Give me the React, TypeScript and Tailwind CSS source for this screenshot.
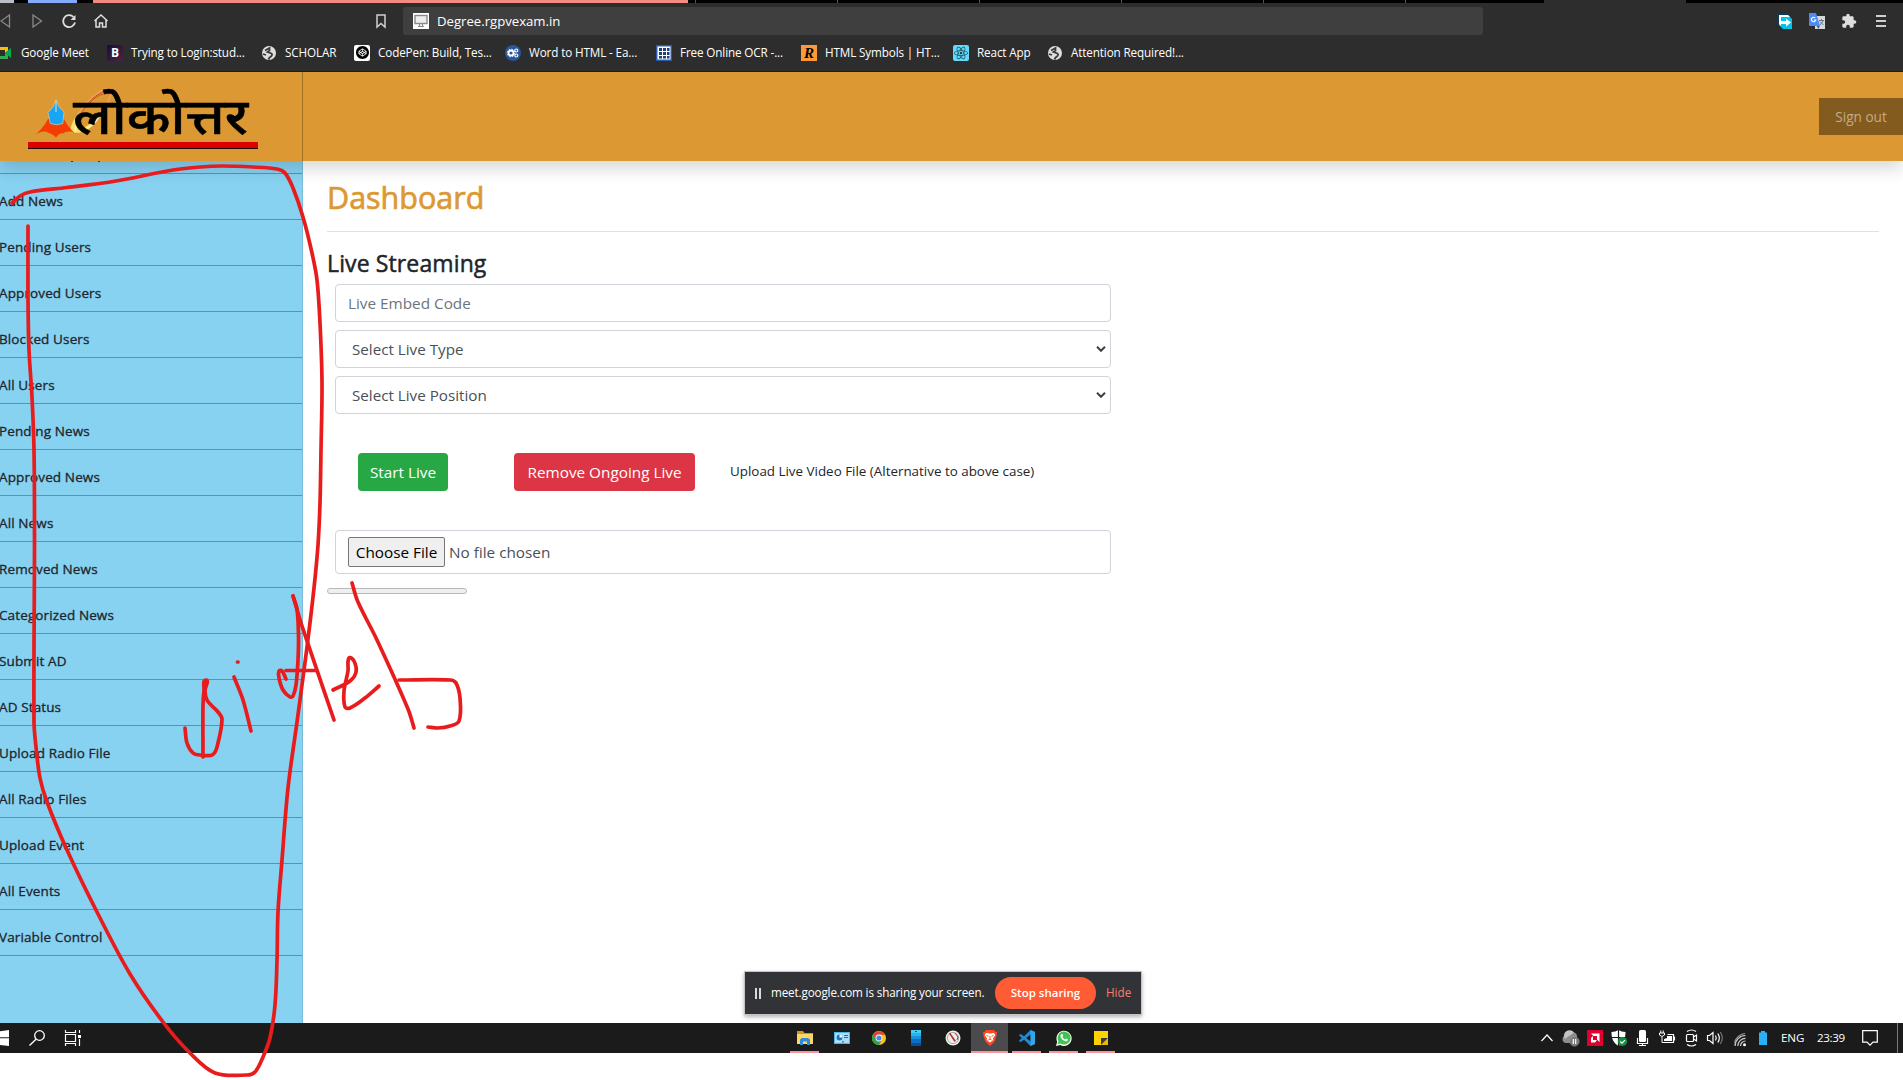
import type { ReactNode } from 'react';
import { SiReact, SiCodepen } from 'react-icons/si';
import { MdExtension } from 'react-icons/md';

const menu = [
  'Add News', 'Pending Users', 'Approved Users', 'Blocked Users', 'All Users', 'Pending News',
  'Approved News', 'All News', 'Removed News', 'Categorized News', 'Submit AD', 'AD Status',
  'Upload Radio File', 'All Radio Files', 'Upload Event', 'All Events', 'Variable Control',
];

type Pt = [number, number];

const strokes: Pt[][] = [
  [[12, 203], [20, 196], [30, 192], [67, 187.5], [113, 181.5], [173, 170], [200, 167], [222, 166], [253, 167], [277, 169], [285, 173], [293, 188], [303, 217], [312, 253], [317, 280], [320, 323], [322, 383], [321, 450], [320, 503], [318, 545], [314, 588], [307, 647], [297, 722], [288, 788], [282, 860], [278, 912], [277, 960], [275, 1005], [270, 1038], [263, 1057], [255, 1072], [247, 1075], [215, 1073], [190, 1053], [163, 1022], [130, 974], [97, 912], [67, 850], [47, 802], [40, 778], [36, 747], [34, 722], [34.5, 540], [34, 450], [32, 397], [29, 350], [28, 300], [28, 226]],
  [[185, 728], [187, 743], [193, 753], [200, 755], [213, 754.5], [218, 743], [222, 719], [218, 712], [212, 706], [207, 700], [205, 691], [206, 680], [204, 691], [203, 705], [203, 757]],
  [[234, 677], [243, 700], [251, 731]],
  [[237.5, 662], [238, 662]],
  [[293, 596], [297, 609], [298.5, 636], [298, 660], [296, 685], [293, 696], [290, 697], [283, 690], [279, 678], [279, 671], [282, 671], [286, 679]],
  [[293, 596], [302, 626], [334, 720]],
  [[286, 670.5], [316, 670.5]],
  [[333, 690], [350, 681], [356, 672], [354, 661], [349, 658], [348, 671], [344, 691], [345, 707], [350, 708], [365, 698], [379, 686]],
  [[352, 583], [358, 602], [377, 640], [408, 709], [414, 728]],
  [[399, 680], [450, 680], [456, 683], [460, 698], [459, 721], [450, 726], [438, 728], [428, 727]],
];

function smooth(p: Pt[]) {
  let d = `M${p[0][0]} ${p[0][1]}`;
  for (let i = 0; i < p.length - 1; i++) {
    const a = p[Math.max(i - 1, 0)];
    const b = p[i];
    const c = p[i + 1];
    const e = p[Math.min(i + 2, p.length - 1)];
    const len = Math.hypot(c[0] - b[0], c[1] - b[1]);
    const h1 = len / (Math.hypot(c[0] - a[0], c[1] - a[1]) || 1) / 3;
    const h2 = len / (Math.hypot(e[0] - b[0], e[1] - b[1]) || 1) / 3;
    d += `C${b[0] + (c[0] - a[0]) * h1} ${b[1] + (c[1] - a[1]) * h1} ${c[0] - (e[0] - b[0]) * h2} ${c[1] - (e[1] - b[1]) * h2} ${c[0]} ${c[1]}`;
  }
  return d;
}

function Globe() {
  return (
    <svg className="size-4" viewBox="0 0 16 16">
      <circle cx="8" cy="8" r="7" fill="#dedede" />
      <path d="M4 5.500L8.500 3v2.500L6.500 7l4 1.500c1.500 1 0 3-2 4l-1 2M2 9l3 1" fill="none" stroke="#3a3a3a" strokeWidth="1.800" />
    </svg>
  );
}

function Bookmark({ w, icon, children }: { w: string; icon: ReactNode; children: ReactNode }) {
  return (
    <div className={`flex shrink-0 items-center gap-2 ${w}`}>
      <span className="flex size-4 shrink-0 items-center justify-center">{icon}</span>
      <span className="whitespace-nowrap">{children}</span>
    </div>
  );
}

function TabStrip() {
  return (
    <div className="flex h-[3px] bg-black">
      <div className="w-[14px] bg-[#b9bcc4]" />
      <div className="ml-[14px] w-[49px] bg-[#84abfb]" />
      <div className="ml-[16px] w-[595px] bg-[#f28b82]" />
      <div className="ml-[7px] w-px bg-[#555]" />
      <div className="ml-[141px] w-px bg-[#555]" />
      <div className="ml-[141px] w-px bg-[#555]" />
      <div className="ml-[141px] w-px bg-[#555]" />
      <div className="ml-[141px] w-px bg-[#555]" />
      <div className="ml-[141px] w-px bg-[#555]" />
      <div className="ml-[138px] w-[142px] bg-[#2d2d2d]" />
    </div>
  );
}

function Toolbar() {
  return (
    <div className="flex h-[36px] items-center">
      <svg className="h-[20px] w-[110px] shrink-0" viewBox="0 0 110 20" fill="none">
        <path d="M9.500 4v12L1 10z" stroke="#8a8a8a" strokeWidth="1.300" />
        <path d="M33 4v12l8.500-6z" stroke="#8a8a8a" strokeWidth="1.300" />
        <path d="M73.500 6A6 6 0 1 0 75 11.500" stroke="#dedede" strokeWidth="1.800" />
        <path d="M75.500 4v5h-5z" fill="#dedede" />
        <path d="M94.500 10l6.500-6 6.500 6M96 9v7h3.500v-4h3v4h3.500V9" stroke="#dedede" strokeWidth="1.500" />
      </svg>
      <svg className="ml-[264px] h-[16px] w-[14px] shrink-0" viewBox="0 0 14 16">
        <path d="M3 2h8v12l-4-3.500L3 14z" fill="none" stroke="#d0d0d0" strokeWidth="1.500" />
      </svg>
      <div className="ml-[15px] flex h-[28px] w-[1080px] shrink-0 items-center rounded-[3px] bg-[#3f3f3f] pl-[10px]">
        <svg className="size-4" viewBox="0 0 16 16">
          <rect width="16" height="16" fill="#fff" />
          <rect x="2" y="2.500" width="12" height="8" fill="#ededed" stroke="#8a8a8a" strokeWidth="1.400" />
          <path d="M6.500 11v2M9.500 11v2M5 13.500h6" stroke="#8a8a8a" strokeWidth="1.200" />
        </svg>
        <span className="ml-2 pt-px text-[13.200px] tracking-[-0.020px] text-white">Degree.rgpvexam.in</span>
      </div>
      <div className="ml-auto mr-[14px] flex items-center gap-[16px]">
        <svg className="size-4" viewBox="0 0 16 16">
          <path d="M0 0h11l-5 16L0 10z" fill="#063b63" />
          <path d="M2 2h9l4 4v10H6l-4-4z" fill="#00c4e8" />
          <path d="M2 2h9l2 2H4v9L2 11z" fill="#fff" />
          <path d="M4 8h5V5.500l5 4-5 4V11H4z" fill="#fff" />
        </svg>
        <svg className="size-4" viewBox="0 0 16 16">
          <rect x="6" y="3" width="10" height="13" fill="#d8d8d8" />
          <path d="M10 7.500h5M12.500 6v1.500M11 12l3.500-4.500M11 8.500l3.500 3.500" stroke="#607d8b" strokeWidth="1" />
          <path d="M0 0h7l4 13H1a1 1 0 0 1-1-1z" fill="#4c8bf5" />
          <path d="M8 13h3l-2 3z" fill="#2a56c6" />
          <path d="M6.300 5A2.200 2.200 0 1 0 6.800 7H4.800" fill="none" stroke="#fff" strokeWidth="1.100" />
        </svg>
        <MdExtension className="size-4 text-[#dedede]" />
        <svg className="size-4" viewBox="0 0 16 16">
          <path d="M3 3h10M3 8h10M3 13h10" stroke="#cfcfcf" strokeWidth="2" />
        </svg>
      </div>
    </div>
  );
}

function Bookmarks() {
  return (
    <div className="flex h-[28px] items-center overflow-hidden text-[11.700px] tracking-[-0.130px] text-white">
      <div className="-ml-[4px] flex">
        <Bookmark w="w-[111px]" icon={
          <svg className="size-4" viewBox="0 0 16 16">
            <path d="M0 3l4 0v10H1L0 12z" fill="#4285f4" />
            <path d="M4 2h8v4l-3 2V5H4z" fill="#fbbc04" />
            <path d="M4 11h5V8l3 2v4H4z" fill="#34a853" />
            <path d="M9 8l6-5v10z" fill="#00ac47" />
          </svg>
        }><span className="ml-px">Google Meet</span></Bookmark>
        <Bookmark w="w-[154px]" icon={<span className="flex size-4 items-center justify-center bg-gradient-to-br from-[#1c0b35] to-[#4b2340] text-[12px] font-bold">B</span>}>Trying to Login:stud...</Bookmark>
        <Bookmark w="w-[93px]" icon={<Globe />}>SCHOLAR</Bookmark>
        <Bookmark w="w-[151px]" icon={<span className="flex size-4 items-center justify-center rounded-[2px] bg-white text-black"><SiCodepen className="size-[13px]" /></span>}>CodePen: Build, Tes...</Bookmark>
        <Bookmark w="w-[151px]" icon={
          <svg className="size-4" viewBox="0 0 16 16">
            <circle cx="8" cy="8" r="8" fill="#2b579a" />
            <circle cx="6" cy="8" r="2.500" fill="none" stroke="#fff" strokeWidth="1.800" />
            <circle cx="6" cy="8" r="3.800" fill="none" stroke="#fff" strokeWidth="1" strokeDasharray="1.500 1.480" />
            <circle cx="11.300" cy="5.500" r="1.500" fill="none" stroke="#fff" strokeWidth="1.200" />
            <circle cx="11.300" cy="10.500" r="1.500" fill="none" stroke="#fff" strokeWidth="1.200" />
          </svg>
        }>Word to HTML - Ea...</Bookmark>
        <Bookmark w="w-[145px]" icon={
          <svg className="size-4" viewBox="0 0 16 16">
            <rect width="16" height="16" fill="#2d5bb0" />
            <rect x="1.500" y="1.500" width="13" height="13" fill="#fff" />
            <path d="M3 3h3v3H3zM7 3h3v3H7zM11 3h2.500v3H11zM3 7h3v3H3zM7 7h3v3H7zM11 7h2.500v3H11zM3 11h3v2.500H3zM7 11h3v2.500H7zM11 11h2.500v2.500H11z" fill="#20406f" />
          </svg>
        }>Free Online OCR -...</Bookmark>
        <Bookmark w="w-[152px]" icon={<span className="flex size-4 items-center justify-center bg-[#ff9933] font-['Liberation_Serif',serif] text-[15px] font-bold italic text-black">R</span>}>HTML Symbols | HT...</Bookmark>
        <Bookmark w="w-[94px]" icon={<span className="flex size-4 items-center justify-center rounded-[2px] bg-[#61dafb] text-[#20434f]"><SiReact className="size-[14px]" /></span>}>React App</Bookmark>
        <Bookmark w="w-[160px]" icon={<Globe />}>Attention Required!...</Bookmark>
      </div>
    </div>
  );
}

function Logo() {
  return (
    <svg className="h-[89px] w-[302px]" viewBox="0 0 302 89">
      <g fill="none">
        <path d="M71 60C70 48 95 17 108 17c8 1-4 28-26 45" stroke="#f0a060" strokeWidth="1.500" />
        <path d="M80 44c6-12 16-24 28-25M86 36c5-8 14-16 24-14" stroke="#c8541e" strokeWidth="1" />
        <path d="M71 60c-1-8 4-14 8-19-2 9-2 15 2 15s13-6 18-14c-2 11-15 22-28 18z" fill="#f8e064" />
        <path d="M75 60c0-8 3-12 6-16M84 57c8-2 13-8 16-14" stroke="#fff3b0" strokeWidth="1.500" />
      </g>
      <path d="M32 65.500Q43 57 48 47h16q5 10 14 17-5-5-9-4.500-4 0-6 2-3-1-7 4-4-4-7-4.500-2-2-6-1.500-6 1-11 6z" fill="#f63c05" />
      <path d="M56 27.500q2 8 8 12.500L62.800 51.500q-6 2.500-12.500 0L48 40.500Q54 36 56 27.500z" fill="#18a5f5" stroke="#e2c79c" strokeWidth=".7" />
      <path d="M56 29v11" stroke="#e9e0cf" strokeWidth="1" />
      <text x="73" y="61.500" textLength="175" lengthAdjust="spacingAndGlyphs" fontSize="49.500" fontWeight="500" fontFamily="'Noto Sans', 'Noto Sans Devanagari', sans-serif" fill="#000" stroke="#000" strokeWidth=".6" strokeLinejoin="round">लोकोत्तर</text>
      <rect x="28" y="70" width="230" height="6" fill="#dc0000" />
      <rect x="28" y="76" width="230" height="1" fill="#1a0000" />
    </svg>
  );
}

function SelectBox({ children }: { children: ReactNode }) {
  return (
    <div className="flex h-[38px] items-center justify-between rounded border border-[#ced4da] pl-4 pr-1 text-[15.200px] text-[#495057]">
      <span>{children}</span>
      <svg className="h-[6px] w-[10px]" viewBox="0 0 10 6">
        <path d="M1 .8l4 4 4-4" fill="none" stroke="#3c4146" strokeWidth="2" />
      </svg>
    </div>
  );
}

function Page() {
  return (
    <div className="flex h-[951px] flex-col overflow-hidden bg-white">
      <header className="relative z-10 flex h-[89px] shrink-0 items-center bg-[#dc9933] shadow-[0_8px_16px_rgba(0,0,0,0.15)]">
        <div className="h-full w-[303px] border-r border-[#a37126]"><Logo /></div>
        <div className="ml-auto flex h-[37px] w-[84px] items-center justify-center bg-[#835b1f] pt-[2px] text-[13.600px] text-[#c5ab83]">Sign out</div>
      </header>
      <div className="flex min-h-0 flex-1">
        <nav className="w-[303px] shrink-0 overflow-hidden border-r border-[#79bcd9] bg-[#87d1f1] text-[13.500px] tracking-[0.120px] text-[#212529] [-webkit-text-stroke:0.3px_#212529]">
          <div className="flex h-[13px] items-start gap-[25px] border-b border-[#1ea7e8] pl-[71px]">
            <span className="h-px w-[2px] bg-[#334a55]" />
            <span className="h-px w-[2px] bg-[#334a55]" />
          </div>
          {menu.map((m) => (
            <div key={m} className="flex h-[46px] items-center border-b border-[#1ea7e8] pt-[9px]">
              <span className="-ml-[1px]">{m}</span>
            </div>
          ))}
        </nav>
        <main className="flex-1 pl-[24px] pr-[24px] text-[#212529]">
          <div className="flex h-[71px] items-center border-b border-[#dee2e6] pt-[3px] text-[30.500px] text-[#dc9933] [-webkit-text-stroke:0.7px_#dc9933]">Dashboard</div>
          <h4 className="mt-[17px] h-[29px] text-[23px] leading-[29px] tracking-[0.120px] [-webkit-text-stroke:0.500px_#212529]">Live Streaming</h4>
          <div className="ml-[8px] mt-[6px] flex w-[776px] flex-col gap-2">
            <div className="flex h-[38px] items-center rounded border border-[#ced4da] px-3 text-[15.300px] text-[#6c757d]">Live Embed Code</div>
            <SelectBox>Select Live Type</SelectBox>
            <SelectBox>Select Live Position</SelectBox>
          </div>
          <div className="mt-[39px] flex h-[38px] items-center pl-[31px] text-[15.300px] text-white">
            <button className="h-[38px] w-[90px] rounded bg-[#28a745] pt-px">Start Live</button>
            <button className="ml-[66px] h-[38px] w-[181px] rounded bg-[#dc3545] pt-px">Remove Ongoing Live</button>
            <span className="ml-[35px] pb-[2px] text-[13.400px] text-[#212529]">Upload Live Video File (Alternative to above case)</span>
          </div>
          <div className="ml-[8px] mt-[39px] flex h-[44px] w-[776px] items-center rounded border border-[#ced4da] px-3 text-[15.300px] text-[#495057]">
            <button className="h-[30px] w-[97px] rounded-[2px] border border-[#767676] bg-[#efefef] text-black">Choose File</button>
            <span className="ml-1">No file chosen</span>
          </div>
          <div className="mt-[14px] h-[6px] w-[140px] rounded-full border border-[#b8b8b8] bg-[#efefef]" />
        </main>
      </div>
    </div>
  );
}

function SharingBar() {
  return (
    <div className="absolute left-[744px] top-[971px] z-20 flex h-[44px] w-[398px] items-center border border-[#c4c4c4] bg-[#323337] pl-[10px] text-[12.200px] text-white shadow-[0_2px_4px_rgba(0,0,0,0.3)]">
      <div className="h-[11px] w-[6px] shrink-0 border-x-2 border-[#dadada]" />
      <span className="ml-[10px] w-[224px] shrink-0 whitespace-nowrap text-[11.700px] tracking-[-0.150px]">meet.google.com is sharing your screen.</span>
      <span className="flex h-8 w-[101px] shrink-0 items-center justify-center rounded-full bg-[#ff5c35] text-[11.500px] font-semibold">Stop sharing</span>
      <span className="ml-[10px] text-[11.700px] text-[#f37f6c]">Hide</span>
    </div>
  );
}

function Task({ active, open, children }: { active?: boolean; open?: boolean; children: ReactNode }) {
  return (
    <div className={active ? 'relative flex h-[30px] w-[37px] items-center justify-center bg-[#4b4b4e]' : 'relative flex h-[30px] w-[37px] items-center justify-center'}>
      <svg className="size-4" viewBox="0 0 16 16">{children}</svg>
      {open && <div className={active ? 'absolute inset-x-0 bottom-0 h-[2px] bg-[#f7939b]' : 'absolute inset-x-[4px] bottom-0 h-[2px] bg-[#f7939b]'} />}
    </div>
  );
}

function Taskbar() {
  return (
    <div className="flex h-[30px] items-center bg-[#1b1b1c] text-white">
      <svg className="h-[30px] w-[90px] shrink-0" viewBox="0 0 90 30" fill="none">
        <path d="M0 8.200L9 7v7.200H0zM0 15.300h9V23l-9-1z" fill="#fff" />
        <circle cx="39.500" cy="12.500" r="4.800" stroke="#fff" strokeWidth="1.300" />
        <path d="M36 16.200l-6.500 6.300" stroke="#fff" strokeWidth="1.400" />
        <path d="M65.500 7v2.500h10V7M65.500 23v-2.500h10V23M65.500 11.500h10v7h-10zM79.500 7v3M79.500 16v7" stroke="#fff" strokeWidth="1.200" />
        <rect x="78" y="12" width="3" height="3" fill="#fff" />
      </svg>
      <div className="ml-[696px] flex">
        <Task open>
          <path d="M0 1h6l1.500 2H16v11H0z" fill="#d69a12" /><path d="M0 4h16v10H0z" fill="#fdd667" />
          <path d="M3 15V9.500L5 8h6l2 1.500V15h-3v-3.500H6V15z" fill="#2f8ad8" />
        </Task>
        <Task>
          <rect y="2" width="16" height="12" fill="#4db5ee" /><rect x="1" y="3" width="14" height="10" fill="#a9defa" />
          <circle cx="5.500" cy="7.500" r="2.900" fill="#1d74bd" /><path d="M5.500 7.500V4.600a2.900 2.900 0 0 1 2.900 2.900z" fill="#fff" />
          <path d="M10 5.500H14M10 7.500H14M3 11.800h7" stroke="#1d74bd" strokeWidth="1.200" /><path d="M3 11.800h5" stroke="#fff" strokeWidth="1.200" />
        </Task>
        <Task>
          <circle cx="8" cy="8" r="7" fill="#fbc116" />
          <path d="M1.900 4.500A7 7 0 0 0 8 15l3-5.500L5 9.500z" fill="#2ba24c" />
          <path d="M8 4.700h6.100a7 7 0 0 0-12.200 0L5 9.500z" fill="#dd4436" />
          <circle cx="8" cy="8" r="3.400" fill="#fff" /><circle cx="8" cy="8" r="2.600" fill="#4a86ee" />
        </Task>
        <Task>
          <rect x="3" width="10" height="16" fill="#0b6fc2" /><rect x="3" width="10" height="9" fill="#1594dd" /><rect x="3" width="10" height="6" fill="#2bb4ea" /><rect x="3" width="10" height="3" fill="#45cdf3" /><rect x="3" y="13" width="10" height="3" fill="#0a4f98" /><path d="M7 1.500h2" stroke="#075377" strokeWidth="1" />
        </Task>
        <Task>
          <circle cx="8" cy="8" r="7.500" fill="#efefef" /><circle cx="8" cy="8" r="5.600" fill="none" stroke="#a8a8a8" strokeWidth="1" />
          <path d="M4 3.500l1.200-.7L11 11l-1.700.8z" fill="#c0281c" /><path d="M10 3l3 4-1 3" fill="none" stroke="#b33" strokeWidth="1" />
        </Task>
        <Task active open>
          <path d="M4 0h8l1.500 2H15l-.3 3-2 6.500L8 16l-4.700-4.500-2-6.500L1 2h1.500z" fill="#fb4a20" />
          <path d="M4 3l4 .5L12 3l1.300 2.300-2.300 3 .3 1.700L8 12.500 4.700 10 5 8.300l-2.300-3z" fill="#fff" /><path d="M4.500 5.500l2 .8M11.500 5.500l-2 .8M8 6v3M6.300 10L8 9l1.700 1" stroke="#fb542b" strokeWidth="1" fill="none" />
        </Task>
        <Task open>
          <path d="M11.500 0L16 2v12l-4.500 2L5 9.700 1.800 12 .2 11.200v-.8L2.800 8 .2 5.600v-.8L1.800 4 5 6.300z" fill="#1f8ad2" /><path d="M11.800 4.500v7L7.200 8z" fill="#1b1b1c" /><path d="M11.500 0L16 2v12l-4.500 2z" fill="#33a5ee" />
        </Task>
        <Task open>
          <path d="M0 16l1.200-4.300A7.600 7.600 0 1 1 4.300 15z" fill="#fff" />
          <path d="M1.500 14.500l1-3.200A6.500 6.500 0 1 1 4.600 13.500z" fill="#3fc351" />
          <path d="M5.500 4l1.200.3.500 1.700-.8.900c.5 1.200 1.400 2 2.700 2.500l.9-1 1.800.8c.3 1.300-1 2.200-2.300 2C7 10.700 5 8.700 4.500 6.500c-.2-1 .3-2 1-2.500z" fill="#fff" />
        </Task>
        <Task open>
          <path d="M1 1h14v7l-7 7H1z" fill="#fdd303" /><path d="M8 8h7l-7 7z" fill="#3a3a3a" /><path d="M1 8h7v7H1z" fill="#fdd303" /><path d="M15 8v7H8z" fill="#e9b800" />
        </Task>
      </div>
      <svg className="ml-[422px] h-[30px] w-[240px] shrink-0" viewBox="1541 0 240 30" fill="none" stroke="#fff" strokeWidth="1.200">
        <path d="M1541.500 18l5.500-6 5.500 6" />
        <path d="M1566 20a3.800 3.800 0 0 1-.5-7.500 5 5 0 0 1 8.500-3 4 4 0 0 1 3 4v6.500z" fill="#8d8d8d" stroke="none" />
        <path d="M1565 16a5 5 0 0 1 9-6.500c-2 1-3 3-6 4z" fill="#c4c4c4" stroke="none" />
        <circle cx="1574.500" cy="18.500" r="4.700" fill="#777" stroke="#999" strokeWidth=".5" /><path d="M1573.300 16v5M1575.700 16v5" />
        <rect x="1587" y="7" width="16" height="16" fill="#e0002f" stroke="none" />
        <path d="M1591 10.500h8.500v8.500l-2.500-2.500v-3.500h-3.500zM1591 15l2-2v4h4l-2 2.500h-4z" fill="#fff" stroke="none" />
        <path d="M1611.500 9q4 0 7-2 3 2 7 2c0 7-2 11-7 14-5-3-7-7-7-14z" fill="#fff" stroke="none" /><path d="M1618.500 7v16M1611 14.500h15" stroke="#1b1b1c" />
        <circle cx="1622.500" cy="18.500" r="4.600" fill="#109146" stroke="none" /><path d="M1620.300 18.500l1.700 1.700 3-3" />
        <rect x="1639" y="7" width="7" height="12" rx="1.500" fill="#fff" stroke="none" /><path d="M1637.500 15v5.500h10V15M1642.500 20v3M1639 22.500h7" />
        <path d="M1667.500 11.500h6v8h-10M1674.500 13.500v4" /><path d="M1667 13h5v5h-8v-2l3-1z" fill="#fff" stroke="none" />
        <path d="M1659.500 10h5v2q-2.500 3-5 0zM1660.800 7.500v2.500M1663.200 7.500v2.500M1662 14v5.500h2" strokeWidth="1" />
        <rect x="1686.500" y="11.500" width="7" height="7" rx="1" /><path d="M1693.500 14l3-2v6l-3-2M1687 8.500q4.500-3 9 0M1687 21.500q4.500 3 9 0" />
        <path d="M1707.500 12.500h2l3.500-3v11l-3.500-3h-2zM1715.500 12.500q1.500 2.500 0 5M1717.800 10.500q3 4.500 0 9" /><path d="M1720.300 9q4 6 0 12" stroke="#777" />
        <path d="M1735 23a10.500 10.500 0 0 1 10.500-10.500M1737.800 23a7.700 7.700 0 0 1 7.700-7.700M1740.500 23a5 5 0 0 1 5-5" stroke="#ccc" /><path d="M1734.500 19.500A13 13 0 0 1 1745 10.500" stroke="#999" /><circle cx="1744.500" cy="21.800" r="1.500" fill="#fff" stroke="none" />
        <path d="M1759 9.500h2V8h4v1.500h2V22h-8z" fill="#29b0f7" stroke="none" />
      </svg>
      <span className="w-[36px] text-[11.600px] tracking-[-0.1px]">ENG</span>
      <span className="w-[45px] text-[11.600px] tracking-[-0.350px]">23:39</span>
      <svg className="size-4" viewBox="0 0 16 16"><path d="M.7.7h14.600v11.500H11L8 15.200l-3-3H.7z" fill="none" stroke="#fff" strokeWidth="1.200" /></svg>
      <div className="ml-[19px] h-full w-px bg-[#7a7a7a]" />
    </div>
  );
}

export default function App() {
  return (
    <div className="relative h-[1080px] w-[1903px] overflow-hidden bg-white font-['Open_Sans','Noto_Sans',sans-serif]">
      <div className="h-[72px] border-b border-[#1e1e1e] bg-[#2d2d2d]">
        <TabStrip />
        <Toolbar />
        <Bookmarks />
      </div>
      <Page />
      <Taskbar />
      <SharingBar />
      <svg className="pointer-events-none absolute inset-0 z-30" width="1903" height="1080" fill="none" stroke="#e81c1c" strokeWidth="3.700" strokeLinecap="round" strokeLinejoin="round">
        {strokes.map((s, i) => <path key={i} d={smooth(s)} />)}
      </svg>
    </div>
  );
}
